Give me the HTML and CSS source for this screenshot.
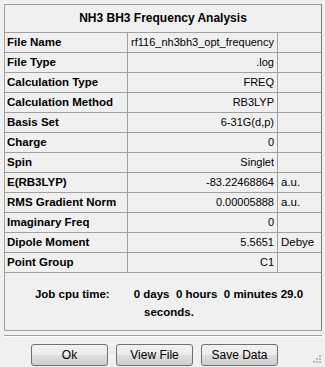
FILE: index.html
```html
<!DOCTYPE html>
<html lang="en">
<head>
  <meta charset="UTF-8">
  <title>NH3 BH3 Frequency Analysis</title>
  <link rel="stylesheet" href="styles.css">
</head>
<body>

<div class="panel">
  <div class="title">NH3 BH3 Frequency Analysis</div>

  <div class="row"><div class="label">File Name</div><div class="value">rf116_nh3bh3_opt_frequency</div><div class="unit"></div></div>
  <div class="row"><div class="label">File Type</div><div class="value">.log</div><div class="unit"></div></div>
  <div class="row"><div class="label">Calculation Type</div><div class="value">FREQ</div><div class="unit"></div></div>
  <div class="row"><div class="label">Calculation Method</div><div class="value">RB3LYP</div><div class="unit"></div></div>
  <div class="row"><div class="label">Basis Set</div><div class="value">6-31G(d,p)</div><div class="unit"></div></div>
  <div class="row"><div class="label">Charge</div><div class="value">0</div><div class="unit"></div></div>
  <div class="row"><div class="label">Spin</div><div class="value">Singlet</div><div class="unit"></div></div>
  <div class="row"><div class="label">E(RB3LYP)</div><div class="value">-83.22468864</div><div class="unit">a.u.</div></div>
  <div class="row"><div class="label">RMS Gradient Norm</div><div class="value">0.00005888</div><div class="unit">a.u.</div></div>
  <div class="row"><div class="label">Imaginary Freq</div><div class="value">0</div><div class="unit"></div></div>
  <div class="row"><div class="label">Dipole Moment</div><div class="value">5.5651</div><div class="unit">Debye</div></div>
  <div class="row"><div class="label">Point Group</div><div class="value">C1</div><div class="unit"></div></div>

  <div class="cpu">
    <p>Job cpu time:<span class="tab"></span>0 days&nbsp; 0 hours&nbsp; 0 minutes 29.0 seconds.</p>
  </div>
</div>

<div class="separator"></div>

<div class="buttons">
  <button class="btn">Ok</button>
  <button class="btn">View File</button>
  <button class="btn">Save Data</button>
</div>

<svg class="grip" width="10" height="10" viewBox="0 0 10 10">
  <rect x="7" y="1" width="2" height="2" fill="#b8b8b8"/>
  <rect x="4" y="4" width="2" height="2" fill="#b8b8b8"/>
  <rect x="7" y="4" width="2" height="2" fill="#b8b8b8"/>
  <rect x="1" y="7" width="2" height="2" fill="#b8b8b8"/>
  <rect x="4" y="7" width="2" height="2" fill="#b8b8b8"/>
  <rect x="7" y="7" width="2" height="2" fill="#b8b8b8"/>
</svg>

</body>
</html>
```

FILE: styles.css
```css
body {
  margin: 0;
  background-color: #f0f0f0;
  font-family: "Liberation Sans", Arial, sans-serif;
  font-size: 12px;
  color: #000;
  position: relative;
  height: 367px;
  overflow: hidden;
}

.panel {
  margin: 4px 0 0 4px;
  width: 316px;
  border: 1px solid #a0a0a0;
  border-right: 1px solid #7c7c7c;
}

.title {
  height: 27px;
  line-height: 27px;
  text-align: center;
  font-weight: bold;
  border-bottom: 1px solid #a0a0a0;
}

.row {
  display: grid;
  grid-template-columns: 123px 150px 1fr;
  height: 19px;
  line-height: 19px;
  font-size: 11.5px;
  border-bottom: 1px solid #a0a0a0;
}

.label {
  font-weight: bold;
  padding-left: 2px;
  border-right: 1px solid #a0a0a0;
  white-space: nowrap;
}

.value {
  text-align: right;
  font-size: 11px;
  padding-right: 3px;
  border-right: 1px solid #a0a0a0;
  white-space: nowrap;
}

.unit {
  padding-left: 3px;
  white-space: nowrap;
}

.cpu {
  height: 57px;
  padding: 12px 0 0 12px;
  box-sizing: border-box;
}

.cpu p {
  margin: 0;
  font-weight: bold;
  font-size: 11.5px;
  line-height: 18px;
  text-align: center;
}

.tab {
  display: inline-block;
  width: 24px;
}

.separator {
  margin: 4px 0 0 4px;
  width: 318px;
  border-top: 1px solid #a0a0a0;
  border-bottom: 1px solid #fff;
}

.buttons {
  display: flex;
  gap: 8px;
  padding: 7px 0 0 31px;
}

.btn {
  width: 77px;
  height: 22px;
  padding: 0;
  font-family: "Liberation Sans", Arial, sans-serif;
  font-size: 12px;
  color: #000;
  border: 1px solid #707070;
  border-radius: 3px;
  background: linear-gradient(#f2f2f2 0%, #ebebeb 50%, #dddddd 51%, #cfcfcf 100%);
}

.grip {
  position: absolute;
  right: 3px;
  bottom: 3px;
}
```
